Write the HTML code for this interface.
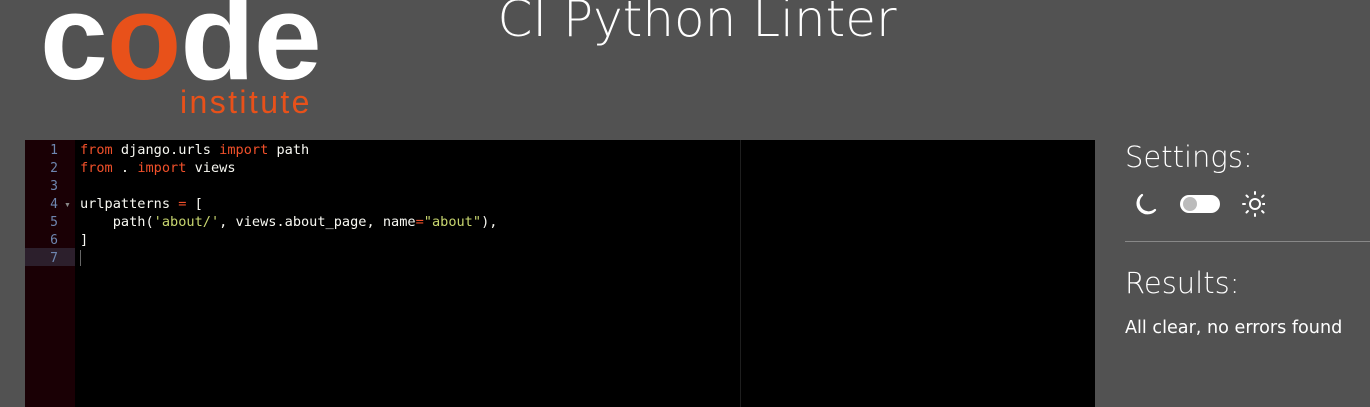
<!DOCTYPE html>
<html><head><style>
body{margin:0;width:1370px;height:407px;background:#525252;position:relative;overflow:hidden;font-family:"Liberation Sans",sans-serif;}
.logo{position:absolute;left:40px;top:-24px;font-size:122px;font-weight:bold;color:#fff;letter-spacing:-1px;line-height:1;}
.logo span{color:#e8511a}
.inst{position:absolute;left:180px;top:84px;font-size:32px;color:#e8511a;letter-spacing:2.4px;}
h1{position:absolute;left:0;width:1394px;text-align:center;top:-10px;margin:0;font-size:50px;color:#fff;font-family:"DejaVu Sans",sans-serif;font-weight:200}
.ed{position:absolute;left:25px;top:140px;width:1070px;height:267px;background:#000;}
.gut{position:absolute;left:0;top:0;width:50px;height:267px;background:#1a0005;}
.pm{position:absolute;left:715px;top:0;width:1px;height:267px;background:#1e1e1e}
.code{position:absolute;top:1px;left:0;font-family:"DejaVu Sans Mono","Liberation Mono",monospace;font-size:13.6px;line-height:18px;color:#f8f8f2;}
.l{height:18px;white-space:pre;position:relative}
.n{display:inline-block;width:33px;text-align:right;color:#6e86b0;margin-right:22px;font-size:13px}
.k{color:#f0502a}.s{color:#c8d66f}.o{color:#f0502a}
.act{background:#2c1f2c;width:50px;position:absolute;left:0;top:108px;height:18px}
.r{position:absolute;left:1125px;color:#fff;font-family:"DejaVu Sans",sans-serif;}
</style></head><body>
<div class="logo">c<span>o</span>de</div>
<div class="inst">institute</div>
<h1>CI Python Linter</h1>
<div class="ed"><div class="gut"></div><div class="act"></div><div class="pm"></div>
<div class="code">
<div class="l"><span class="n">1</span><span class="k">from</span> django.urls <span class="k">import</span> path</div>
<div class="l"><span class="n">2</span><span class="k">from</span> . <span class="k">import</span> views</div>
<div class="l"><span class="n">3</span></div>
<div class="l"><span class="n">4</span>urlpatterns <span class="o">=</span> [</div>
<div class="l"><span class="n">5</span>    path(<span class="s">'about/'</span>, views.about_page, name<span class="o">=</span><span class="s">"about"</span>),</div>
<div class="l"><span class="n">6</span>]</div>
<div class="l"><span class="n">7</span><span style="border-left:1px solid #666"> </span></div>
</div>
<div style="position:absolute;left:39px;top:62px;color:#888;font-size:7px">▼</div>
</div>
<div class="r" style="top:140px;font-size:29px;font-weight:200">Settings:</div>
<svg class="r" style="top:190px" width="140" height="30" viewBox="0 0 140 30">
<path d="M17 5 A10 10 0 1 0 30 20 A9 9 0 0 1 17 5 Z" fill="none" stroke="#fff" stroke-width="2.2" stroke-linejoin="round"/>
<rect x="55" y="5" width="40" height="18" rx="9" fill="#fff"/>
<circle cx="65" cy="14" r="7" fill="#bbb"/>
<circle cx="130" cy="14" r="5" fill="none" stroke="#fff" stroke-width="2"/>
<g stroke="#fff" stroke-width="2" stroke-linecap="round"><path d="M130 2v2M130 24v2M118 14h2M140 14h-2M121.5 5.5l1.4 1.4M138.5 22.5l-1.4-1.4M121.5 22.5l1.4-1.4M138.5 5.5l-1.4 1.4"/></g>
</svg>
<div style="position:absolute;left:1125px;top:241px;width:245px;height:1px;background:#888"></div>
<div class="r" style="top:266px;font-size:29px;font-weight:200">Results:</div>
<div class="r" style="top:318px;font-size:17.6px">All clear, no errors found</div>
</body></html>
